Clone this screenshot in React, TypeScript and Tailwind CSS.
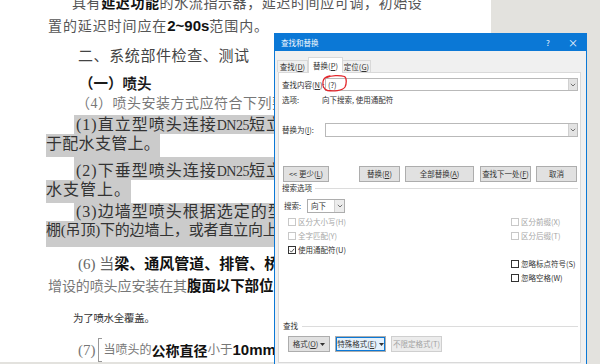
import React from 'react';

interface CheckProps {
  label: string;
  checked?: boolean;
  disabled?: boolean;
}

const Check: React.FC<CheckProps> = ({ label, checked, disabled }) => (
  <div className="flex h-[12px] items-center">
    <span
      className={`flex h-[8px] w-[8px] items-center justify-center border bg-white ${
        disabled ? 'border-[#c8c8c8]' : 'border-[#333]'
      }`}
    >
      {checked && (
        <svg width="7" height="7" viewBox="0 0 7 7">
          <path d="M1 3.6 L2.8 5.4 L6 1.5" fill="none" stroke="#222" strokeWidth="0.9" />
        </svg>
      )}
    </span>
    <span className={`ml-[2px] ${disabled ? 'text-[#a6a6a6]' : 'text-[#333]'}`}>{label}</span>
  </div>
);

const Chevron = () => (
  <svg width="6" height="4" viewBox="0 0 6 4">
    <path d="M0.8 0.8 L3 3 L5.2 0.8" fill="none" stroke="#555" strokeWidth="0.8" />
  </svg>
);

const Caret = () => (
  <svg width="5" height="3" viewBox="0 0 5 3" className="ml-[2px]">
    <path d="M0 0 H5 L2.5 3 Z" fill="#333" />
  </svg>
);

const Btn: React.FC<{ children: React.ReactNode; className?: string }> = ({ children, className }) => (
  <div
    className={`flex h-[16px] items-center justify-center border border-[#adadad] bg-[#e1e1e1] whitespace-nowrap ${className ?? ''}`}
  >
    {children}
  </div>
);

const Document = () => (
  <div className="flex h-[362px] w-[491px] flex-col overflow-hidden bg-white font-['Liberation_Serif','Noto_Sans_CJK_SC',serif] text-[#555] whitespace-nowrap">
    <div className="-mt-[6px] h-[18px] pl-[72px] text-[14px] leading-[18px] tracking-[0.6px]">
      具有<b className="font-['Liberation_Sans','Noto_Sans_CJK_SC',sans-serif] font-bold text-[#111]">延迟功能</b>
      的水流指示器，延迟时间应可调，初始设
    </div>
    <div className="mt-[5px] h-[18px] pl-[48px] text-[14px] leading-[18px] tracking-[0.9px]">
      置的延迟时间应在
      <b className="font-['Liberation_Sans',sans-serif] text-[15px] font-bold tracking-normal text-[#111]">2~90s</b>
      范围内。
    </div>
    <div className="mt-[11px] h-[20px] pl-[78px] text-[15px] leading-[20px] tracking-[0.6px] text-[#444]">
      二、系统部件检查、测试
    </div>
    <div className="mt-[7px] h-[20px] pl-[79px] font-['Noto_Sans_CJK_SC',sans-serif] text-[14.5px] font-bold leading-[20px] text-[#1a1a1a]">
      （一）喷头
    </div>
    <div className="mt-[1px] h-[20px] pl-[76px] text-[14px] leading-[20px] tracking-[0.5px] text-[#777]">
      （4）喷头安装方式应符合下列要求
    </div>

    <div className="mt-[1px] ml-[74px] h-[19px] bg-[#cbcbcb] pl-[2px] text-[16px] leading-[19px] tracking-[1px] text-[#333]">
      (1)直立型喷头连接<span className="font-['Liberation_Serif',serif] text-[14px] tracking-[-0.5px]">DN25</span>短立管或
    </div>
    <div className="h-[23px] pl-[46px] text-[16px] leading-[19px] tracking-[0.3px] text-[#333]">
      <span className="inline-block h-[23px] bg-[#cbcbcb]">于配水支管上。</span>
    </div>
    <div className="ml-[74px] h-[23px] bg-[#cbcbcb] pl-[2px] pt-[4px] text-[16px] leading-[19px] tracking-[1px] text-[#333]">
      (2)下垂型喷头连接<span className="font-['Liberation_Serif',serif] text-[14px] tracking-[-0.5px]">DN25</span>短立管或
    </div>
    <div className="h-[23px] pl-[46px] text-[16px] leading-[19px] tracking-[1px] text-[#333]">
      <span className="inline-block h-[23px] bg-[#cbcbcb]">水支管上。</span>
    </div>
    <div className="ml-[74px] h-[18px] bg-[#cbcbcb] pl-[2px] text-[16px] leading-[18px] tracking-[1px] text-[#333]">
      (3)边墙型喷头根据选定的型号、规格
    </div>
    <div className="ml-[46px] h-[26px] bg-[#cbcbcb] text-[15px] leading-[18px] tracking-[-0.2px] text-[#333]">
      棚(吊顶)下的边墙上，或者直立向上
    </div>

    <div className="mt-[6px] h-[20px] pl-[78px] text-[15px] leading-[20px] text-[#666]">
      (6) 当
      <b className="font-['Noto_Sans_CJK_SC',sans-serif] font-bold text-[#111]">梁、通风管道、排管、桥架</b>
    </div>
    <div className="mt-[2px] h-[20px] pl-[48px] text-[14px] leading-[20px] tracking-[-0.1px] text-[#777]">
      增设的喷头应安装在其
      <b className="font-['Noto_Sans_CJK_SC',sans-serif] text-[14.5px] font-bold text-[#111]">腹面以下部位</b>
    </div>
    <div className="mt-[16px] h-[16px] pl-[73px] text-[10.5px] leading-[16px] tracking-[-0.3px] text-[#333]">
      为了喷水全覆盖。
    </div>
    <div className="mt-[13px] flex h-[20px] items-center pl-[78px] text-[15px] leading-[20px] text-[#777]">
      <span>(7)</span>
      <span className="mx-[2px] h-[24px] w-[4px] border border-r-0 border-[#999]" />
      <span className="text-[12px]">当喷头的</span>
      <b className="font-['Noto_Sans_CJK_SC',sans-serif] text-[14px] font-bold text-[#111]">公称直径</b>
      <span className="text-[12.5px]">小于</span>
      <b className="font-['Liberation_Sans',sans-serif] text-[15px] font-bold text-[#111]">10mm</b>
    </div>
  </div>
);

const Dialog = () => (
  <div className="absolute left-[274px] top-[33px] h-[340px] w-[313px] border border-[#0b78d6] bg-[#f0f0f0] font-['Noto_Sans_CJK_SC',sans-serif] text-[7.5px] text-[#333]">
    <div className="flex h-[17px] items-center bg-[#0b78d6] pl-[6px] text-[#f4f8fd]">
      <span>查找和替换</span>
      <span className="ml-auto w-[12px] text-center text-[8px]">?</span>
      <span className="ml-[13px] mr-[7px] w-[12px] text-center text-[10px] leading-none">×</span>
    </div>

    <div className="mt-[6px] flex h-[15px] items-end pl-[2px]">
      <div className="flex h-[12px] w-[31px] items-center justify-center border border-b-0 border-[#d9d9d9] bg-[#f0f0f0]">
        查找(<u>D</u>)
      </div>
      <div className="relative z-10 -mb-px flex h-[16px] w-[35px] items-center justify-center border border-b-0 border-[#d9d9d9] bg-white">
        替换(<u>P</u>)
      </div>
      <div className="flex h-[12px] w-[28px] items-center justify-center border border-b-0 border-l-0 border-[#d9d9d9] bg-[#f0f0f0]">
        定位(<u>G</u>)
      </div>
    </div>

    <div className="relative ml-[3px] h-[291px] w-[303px] border border-[#d9d9d9] bg-white">
      <div className="mt-[5px] flex h-[13px] items-center pl-[3px] pr-[2px]">
        <span className="w-[43px]">查找内容(<u>N</u>):</span>
        <div className="flex h-[13px] flex-1 items-center border border-[#b9b9b9] bg-white">
          <span className="pl-[2px]">(?)</span>
          <span className="ml-auto flex h-full w-[9px] items-center justify-center border-l border-[#d0d0d0] bg-[#e3e3e3]">
            <Chevron />
          </span>
        </div>
      </div>
      <div className="mt-[3px] flex h-[12px] items-center pl-[3px]">
        <span className="w-[40px]">选项:</span>
        <span>向下搜索, 使用通配符</span>
      </div>
      <div className="mt-[17px] flex h-[14px] items-center pl-[3px] pr-[2px]">
        <span className="w-[43px]">替换为(<u>I</u>):</span>
        <div className="flex h-[14px] flex-1 items-center border border-[#b9b9b9] bg-white">
          <span className="ml-auto flex h-full w-[9px] items-center justify-center border-l border-[#d0d0d0] bg-[#e3e3e3]">
            <Chevron />
          </span>
        </div>
      </div>

      <div className="mt-[29px] flex h-[16px] pl-[4px]">
        <Btn className="w-[46px]">&lt;&lt; 更少(<u>L</u>)</Btn>
        <Btn className="ml-[30px] w-[41px]">替换(<u>R</u>)</Btn>
        <Btn className="ml-[5px] w-[69px]">全部替换(<u>A</u>)</Btn>
        <Btn className="ml-[6px] w-[51px]">查找下一处(<u>F</u>)</Btn>
        <Btn className="ml-[5px] w-[41px]">取消</Btn>
      </div>

      <div className="mt-[1px] flex h-[10px] items-center pl-[3px] pr-[2px]">
        <span>搜索选项</span>
        <span className="ml-[3px] h-px flex-1 bg-[#dcdcdc]" />
      </div>

      <div className="mt-[6px] flex h-[14px] items-center pl-[5px]">
        <span className="w-[23px]">搜索:</span>
        <div className="flex h-[14px] w-[38px] items-center border border-[#adadad] bg-white">
          <span className="pl-[3px]">向下</span>
          <span className="ml-auto flex h-full w-[10px] items-center justify-center border-l border-[#d0d0d0] bg-[#ececec]">
            <Chevron />
          </span>
        </div>
      </div>

      <div className="mt-[3px] grid grid-cols-[223px_1fr] gap-y-[2px] pl-[9px]">
        <Check label="区分大小写(H)" disabled />
        <Check label="区分前缀(X)" disabled />
        <Check label="全字匹配(Y)" disabled />
        <Check label="区分后缀(T)" disabled />
        <Check label="使用通配符(U)" checked />
        <div className="h-[12px]" />
        <div className="h-[12px]" />
        <Check label="忽略标点符号(S)" />
        <div className="h-[12px]" />
        <Check label="忽略空格(W)" />
      </div>

      <div className="mt-[37px] flex h-[10px] items-center pl-[4px] pr-[2px]">
        <span>查找</span>
        <span className="ml-[4px] h-px flex-1 bg-[#dcdcdc]" />
      </div>

      <div className="mt-[5px] flex h-[16px] pl-[9px]">
        <Btn className="w-[42px]">
          格式(<u>O</u>)<Caret />
        </Btn>
        <Btn className="ml-[5px] w-[51px] border-[#0b78d6] bg-[#e5f1fb] shadow-[inset_0_0_0_1px_#0b78d6]">
          特殊格式(<u>E</u>)<Caret />
        </Btn>
        <div className="ml-[5px] flex h-[16px] w-[51px] items-center justify-center border border-[#cfcfcf] bg-[#ececec] text-[#a3a3a3]">
          不限定格式(T)
        </div>
      </div>

      <svg className="absolute left-[42px] top-[1px]" width="27" height="19" viewBox="0 0 27 19">
        <path
          d="M6 3.5 C10 1.2 19 1 23.5 2.5 C26 4 25.5 10 24 13 C21.5 17 12 17.5 6.5 16.5 C2.5 15.5 1.5 11 2 7.5 C2.5 4.5 4.5 2.5 9 2"
          fill="none"
          stroke="#e3262b"
          strokeWidth="1.3"
          strokeLinecap="round"
        />
      </svg>
    </div>
  </div>
);

export default function App() {
  return (
    <div className="relative h-[364px] w-[600px] overflow-hidden bg-[#e3e2de]">
      <Document />
      <Dialog />
    </div>
  );
}
